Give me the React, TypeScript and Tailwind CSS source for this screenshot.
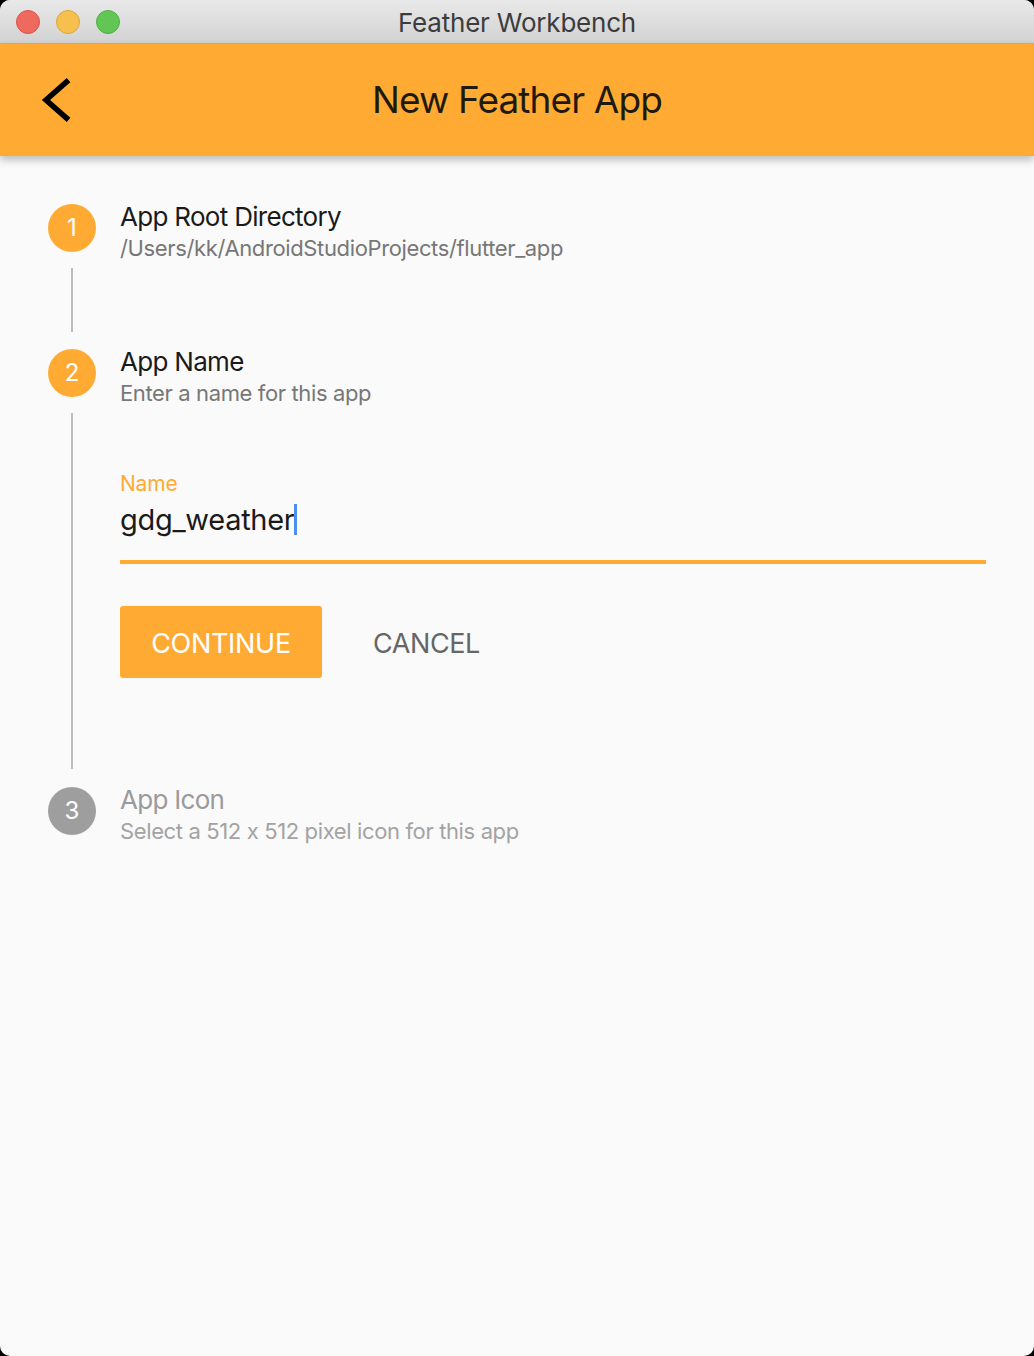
import React from "react";

const font = { fontFamily: "Inter, 'Noto Sans', sans-serif" };

function Circle({ n, active }: { n: number; active: boolean }) {
  return (
    <div
      className={`w-12 h-12 rounded-full flex items-center justify-center text-white text-[24px] shrink-0 ${
        active ? "bg-[#ffab33]" : "bg-[#9e9e9e]"
      }`}
    >
      {n}
    </div>
  );
}

function StepHeader({ n, active, title, subtitle }: { n: number; active: boolean; title: string; subtitle: string }) {
  return (
    <div className="flex gap-[24px] h-12">
      <Circle n={n} active={active} />
      <div className="flex flex-col -mt-[3px]">
        <span
          className={`text-[26px] leading-[32px] tracking-[-0.7px] whitespace-nowrap ${
            active ? "text-[#1a1a1a]" : "text-[#9a9a9a]"
          }`}
        >
          {title}
        </span>
        <span
          className={`text-[22px] leading-[30px] tracking-[-0.37px] whitespace-nowrap ${
            active ? "text-[#777]" : "text-[#a3a3a3]"
          }`}
        >
          {subtitle}
        </span>
      </div>
    </div>
  );
}

export default function App() {
  return (
    <div className="w-[1034px] h-[1356px] bg-black" style={font}>
      <div className="w-full h-full rounded-[10px] overflow-hidden bg-[#fafafa] flex flex-col">
        {/* title bar */}
        <div className="h-[44px] shrink-0 bg-gradient-to-b from-[#e9e9e9] to-[#d2d2d2] border-b border-[#b3b3b3] relative flex items-center justify-center">
          <div className="absolute left-[16px] top-[10px] flex gap-[16px]">
            <div className="w-6 h-6 rounded-full bg-[#ee6a5f] border border-[#d9534b]" />
            <div className="w-6 h-6 rounded-full bg-[#f6c04f] border border-[#dea63a]" />
            <div className="w-6 h-6 rounded-full bg-[#62c655] border border-[#4fae44]" />
          </div>
          <span className="text-[26px] text-[#3c3c3c] leading-none tracking-[-0.2px] mt-[2px]">Feather Workbench</span>
        </div>
        {/* app bar */}
        <div className="h-[112px] shrink-0 bg-[#ffab33] relative flex items-center justify-center shadow-[0_4px_8px_rgba(0,0,0,0.25)] z-10">
          <svg className="absolute left-[40px] top-[34px]" width="32" height="44" viewBox="0 0 32 44">
            <path d="M26.5 4 L6 22 L26.5 40" fill="none" stroke="#000" strokeWidth="5.5" strokeLinecap="square" />
          </svg>
          <span className="text-[37px] text-[#1f1a10] tracking-[-0.9px]">New Feather App</span>
        </div>
        {/* stepper */}
        <div className="pl-[48px] pr-[48px] pt-[48px] flex flex-col">
          <StepHeader n={1} active title="App Root Directory" subtitle="/Users/kk/AndroidStudioProjects/flutter_app" />
          <div className="flex">
            <div className="w-[48px] flex justify-center pt-[16px] pb-[17px]">
              <div className="w-[2px] h-[64px] bg-[#bdbdbd]" />
            </div>
          </div>
          <StepHeader n={2} active title="App Name" subtitle="Enter a name for this app" />
          <div className="flex gap-[24px]">
            <div className="w-[48px] flex justify-center pt-[16px] pb-[18px] shrink-0">
              <div className="w-[2px] h-[356px] bg-[#bdbdbd]" />
            </div>
            <div className="flex-1 flex flex-col pt-[74px]">
              <span className="text-[21px] text-[#ffab33] leading-[26px] tracking-[-0.2px]">Name</span>
              <div className="mt-[2px] flex items-center h-[40px]">
                <span className="text-[29px] text-[#1a1a1a] tracking-[-0.3px] leading-none">gdg_weather</span>
                <span className="w-[3px] h-[31px] bg-[#4a8ff0]" />
              </div>
              <div className="mt-[21px] h-[4px] bg-[#ffab33]" />
              <div className="mt-[42px] flex items-center">
                <div className="w-[202px] h-[72px] pt-[5px] rounded-[3px] bg-[#ffab33] flex items-center justify-center text-white text-[27px] tracking-[-0.3px]">
                  CONTINUE
                </div>
                <div className="ml-[51px] pt-[5px] text-[27px] text-[#666] tracking-[-0.4px]">CANCEL</div>
              </div>
            </div>
          </div>
          <StepHeader n={3} active={false} title="App Icon" subtitle="Select a 512 x 512 pixel icon for this app" />
        </div>
      </div>
    </div>
  );
}
